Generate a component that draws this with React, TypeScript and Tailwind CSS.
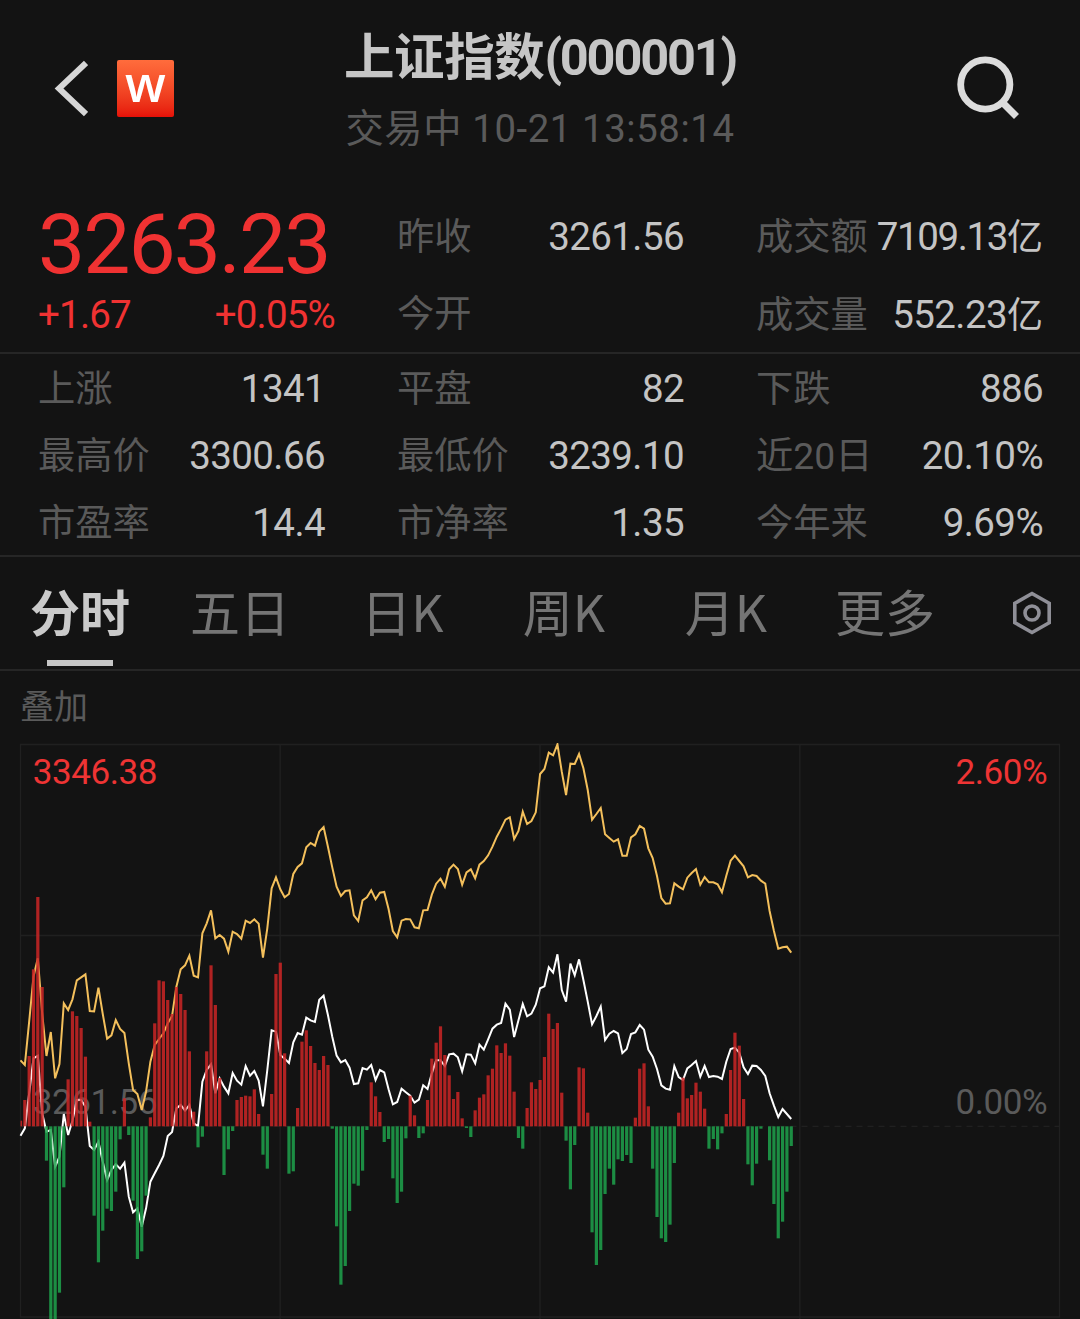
import { clsx } from "clsx";

type Stat = {
  label: string;
  value: string;
  unit?: string;
  tight?: boolean;
};

const quoteRows: Stat[][] = [
  [
    { label: "昨收", value: "3261.56" },
    { label: "成交额", value: "7109.13", unit: "亿", tight: true },
  ],
  [
    { label: "今开", value: "" },
    { label: "成交量", value: "552.23", unit: "亿" },
  ],
];

const statRows: Stat[][] = [
  [
    { label: "上涨", value: "1341" },
    { label: "平盘", value: "82" },
    { label: "下跌", value: "886" },
  ],
  [
    { label: "最高价", value: "3300.66" },
    { label: "最低价", value: "3239.10" },
    { label: "近20日", value: "20.10%" },
  ],
  [
    { label: "市盈率", value: "14.4" },
    { label: "市净率", value: "1.35" },
    { label: "今年来", value: "9.69%" },
  ],
];

const tabs = [
  { label: "分时", width: "w-[160px]" },
  { label: "五日", width: "w-[160px]" },
  { label: "日K", width: "w-[165px]" },
  { label: "周K", width: "w-[158px]" },
  { label: "月K", width: "w-[166px]" },
  { label: "更多", width: "w-[152px]" },
];

// One entry per minute. Chart units: 3 per pixel, y grows downwards, ZERO is the previous close.
const ZERO = 739;
const STEP = 12.99;

const bars = [
  722, 660, 528, 268, 51, 321, 842, 1330, 1330, 1238, 922, 598, 394, 408, 444, 530, 725, 1007, 1147, 1052,
  986, 993, 935, 778, 655, 765, 962, 1137, 1114, 947, 712, 430, 301, 304, 360, 402, 321, 342, 390, 514,
  695, 802, 770, 514, 256, 375, 594, 885, 808, 753, 660, 651, 647, 649, 628, 702, 824, 866, 642, 282,
  248, 520, 881, 874, 684, 485, 451, 498, 549, 570, 528, 555, 746, 1039, 1214, 1158, 993, 911, 917, 872,
  750, 607, 649, 696, 786, 777, 895, 969, 935, 775, 647, 706, 774, 760, 660, 536, 488, 439, 525, 586,
  657, 636, 715, 744, 771, 691, 653, 643, 586, 566, 496, 519, 490, 527, 635, 774, 806, 684, 607, 627,
  600, 531, 401, 447, 429, 638, 782, 928, 795, 562, 565, 698, 1057, 1155, 1110, 942, 866, 914, 838, 843,
  825, 849, 713, 566, 550, 679, 866, 1011, 1075, 1086, 1034, 849, 698, 593, 655, 645, 608, 635, 686, 806,
  777, 808, 760, 702, 570, 458, 497, 657, 853, 916, 851, 746, 739, 841, 972, 1075, 1025, 935, 798,
];

const leadLine = [
  541, 555, 425, 290, 235, 400, 528, 456, 595, 552, 370, 390, 358, 301, 292, 283, 393, 394, 323, 402,
  476, 466, 420, 447, 459, 550, 630, 642, 690, 635, 545, 495, 477, 460, 430, 408, 320, 268, 256, 227,
  287, 292, 160, 130, 91, 175, 165, 176, 215, 155, 162, 176, 122, 129, 118, 131, 233, 145, 25, -8,
  28, 52, 42, -18, -39, -50, -98, -111, -103, -145, -159, -100, -38, 20, 48, 33, 31, 106, 123, 61,
  52, 31, 58, 38, 36, 87, 153, 172, 122, 117, 118, 142, 145, 91, 90, 44, 11, -4, 20, -32,
  -46, -33, 14, -23, -32, -5, -46, -57, -74, -100, -130, -154, -181, -188, -123, -147, -205, -168, -177, -203,
  -318, -333, -382, -374, -407, -325, -255, -349, -348, -378, -335, -270, -181, -198, -216, -137, -126, -115, -122, -73,
  -73, -128, -137, -162, -154, -95, -66, -12, 54, 71, 70, 10, 20, 28, -7, -21, -33, 14, -9, 7,
  7, 13, 37, -13, -58, -73, -57, -41, -8, -15, -12, 2, 11, 93, 153, 206, 202, 200, 218,
];

const priceLine = [
  767, 745, 640, 535, 527, 700, 755, 750, 860, 830, 702, 765, 722, 660, 660, 680, 798, 810, 785, 845,
  900, 870, 853, 866, 848, 950, 997, 985, 1040, 985, 905, 880, 855, 828, 768, 756, 685, 675, 692, 675,
  730, 738, 605, 570, 553, 640, 595, 620, 640, 579, 602, 614, 558, 587, 573, 602, 679, 570, 451, 455,
  525, 536, 549, 487, 459, 464, 413, 421, 426, 359, 347, 405, 470, 527, 547, 540, 563, 612, 610, 564,
  569, 555, 600, 570, 577, 628, 673, 666, 626, 637, 647, 668, 659, 616, 627, 580, 541, 541, 558, 523,
  521, 532, 574, 523, 524, 550, 494, 509, 478, 446, 434, 429, 371, 389, 471, 421, 372, 409, 401, 374,
  325, 319, 262, 278, 223, 330, 365, 251, 286, 238, 300, 365, 433, 408, 380, 480, 461, 453, 460, 519,
  507, 462, 457, 435, 449, 509, 530, 567, 616, 626, 629, 558, 591, 600, 565, 555, 543, 590, 558, 591,
  588, 590, 597, 545, 507, 503, 518, 562, 582, 557, 558, 570, 588, 640, 677, 711, 687, 702, 717,
];

function toPoints(values: number[]) {
  return values.map((y, i) => `${(i * STEP).toFixed(1)},${y}`).join(" ");
}

function StatCell({ label, value, unit, tight }: Stat) {
  return (
    <div className="flex items-baseline justify-between whitespace-nowrap leading-none">
      <span className="text-[37.3px] text-[#5a5a5a]">{label}</span>
      <span className={clsx("text-[38.5px] text-[#c4c4c4]", tight ? "tracking-[-1.4px]" : "tracking-[-0.6px]")}>
        {value}
        {unit && <span className="text-[36px] tracking-normal">{unit}</span>}
      </span>
    </div>
  );
}

function Header() {
  return (
    <header className="flex h-[180px] items-start justify-between">
      <div className="flex w-[340px] items-center gap-[29px] pt-[60px] pl-[53px]">
        <svg className="h-[57px] w-[35px]" viewBox="0 0 35 57" fill="none" stroke="#d6d6d6" strokeWidth="6">
          <path d="M33 3 6 28.500l27 25.500" />
        </svg>
        <div className="flex h-[57px] w-[57px] items-center justify-center rounded-[2px] bg-linear-to-b from-[#ff6c3c] to-[#e60f08]">
          <span className="-mt-[11px] font-['Open_Sans'] text-[50px] leading-none font-semibold text-white">w</span>
        </div>
      </div>
      <div className="flex flex-col items-center whitespace-nowrap">
        <h1 className="mt-[32px] text-[50.5px] leading-[52px] font-bold tracking-[-0.4px] text-[#c6c6c6]">
          上证指数<span className="tracking-[-2.2px]">(000001)</span>
        </h1>
        <p className="mt-[22px] text-[38.3px] leading-[46px] tracking-[0.6px] text-[#5a5a5a]">交易中 10-21 13:58:14</p>
      </div>
      <div className="flex w-[340px] justify-end pt-[55px] pr-[58px]">
        <svg className="h-[66px] w-[66px]" viewBox="0 0 66 66" fill="none" stroke="#dcdcdc">
          <circle cx="29.3" cy="29.5" r="24.6" strokeWidth="6.8" />
          <path d="m45 46 15.500 15.500" strokeWidth="7" />
        </svg>
      </div>
    </header>
  );
}

function Chart() {
  return (
    <svg className="block h-[576px] w-full" viewBox="-61.500 -411 3240 1728">
      <g stroke="#202020" strokeWidth="4" fill="none">
        <path d="M0-406.500H3117V1311H0zM0 166.500H3117" />
        <path d="M779-406.500V1317M1558.500-406.500V1317M2338-406.500V1317" />
        <path d={`M0 ${ZERO}H3117`} strokeDasharray="18 15" />
      </g>
      <g className="font-['Roboto'] text-[105px] tracking-[-1.3px]">
        <text x="37" y="-288" fill="#ee3434">3346.38</text>
        <text x="3080" y="-288" textAnchor="end" fill="#ee3434">2.60%</text>
        <text x="37" y="702" fill="#5a5a5a">3261.56</text>
        <text x="3080" y="702" textAnchor="end" fill="#5a5a5a">0.00%</text>
      </g>
      <polyline points={toPoints(leadLine)} fill="none" stroke="#f4c05c" strokeWidth="6" />
      <polyline points={toPoints(priceLine)} fill="none" stroke="#ffffff" strokeWidth="6" />
      {bars.map((y, i) => (
        <rect
          key={i}
          x={i === 0 ? 0 : i * STEP - 4.8}
          y={Math.min(y, ZERO)}
          width={i === 0 ? 5 : 9.6}
          height={Math.abs(y - ZERO)}
          fill={y < ZERO ? "#cc2626" : "#1fa34c"}
          opacity="0.85"
        />
      ))}
    </svg>
  );
}

export default function App() {
  return (
    <div className="h-[1319px] w-[1080px] overflow-hidden bg-[#131313] font-['Roboto','Noto_Sans_CJK_SC',sans-serif]">
      <Header />

      <section className="grid h-[174px] grid-cols-[287px_1fr] gap-x-[72px] border-b-2 border-[#262626] px-[38px]">
        <div className="whitespace-nowrap text-[#f03232]">
          <div className="mt-[23px] text-[84px] leading-[84px] tracking-[-2px]">3263.23</div>
          <div className="mt-[9px] flex w-[297px] justify-between text-[38.5px] leading-none tracking-[-0.8px]">
            <span>+1.67</span>
            <span>+0.05%</span>
          </div>
        </div>
        <div className="flex flex-col gap-[39px] pt-[38px]">
          {quoteRows.map((row, i) => (
            <div key={i} className="grid h-[39px] grid-cols-[287px_287px] gap-x-[72px]">
              {row.map((stat) => (
                <StatCell key={stat.label} {...stat} />
              ))}
            </div>
          ))}
        </div>
      </section>

      <section className="flex h-[203px] flex-col gap-[28px] border-b-2 border-[#262626] px-[38px] pt-[16px]">
        {statRows.map((row, i) => (
          <div key={i} className="grid h-[39px] grid-cols-[287px_287px_287px] gap-x-[72px]">
            {row.map((stat) => (
              <StatCell key={stat.label} {...stat} />
            ))}
          </div>
        ))}
      </section>

      <nav className="flex h-[114px] border-b-2 border-[#262626] font-['Noto_Sans_CJK_SC',sans-serif]">
        {tabs.map((tab, i) => (
          <button
            key={tab.label}
            type="button"
            className={clsx(
              "flex flex-col items-center text-[50px] leading-[60px] whitespace-nowrap",
              tab.width,
              i === 0 ? "font-bold text-[#cacaca]" : "text-[#757575]",
            )}
          >
            <span className="mt-[23px]">{tab.label}</span>
            {i === 0 && <span className="mt-[20px] h-[6px] w-[66px] bg-[#c6c6c6]" />}
          </button>
        ))}
        <button type="button" className="ml-auto pr-[27px]">
          <svg className="h-[46px] w-[42px]" viewBox="0 0 42 46" fill="none" stroke="#8f8f97" strokeWidth="3.6">
            <path d="M21 3.500 38.200 13.300V32.700L21 42.500 3.800 32.700V13.300z" />
            <circle cx="21" cy="23" r="7" />
          </svg>
        </button>
      </nav>

      <div className="flex h-[72px] items-center pl-[20px] text-[34px] leading-none text-[#5a5a5a]">叠加</div>
      <Chart />
    </div>
  );
}
